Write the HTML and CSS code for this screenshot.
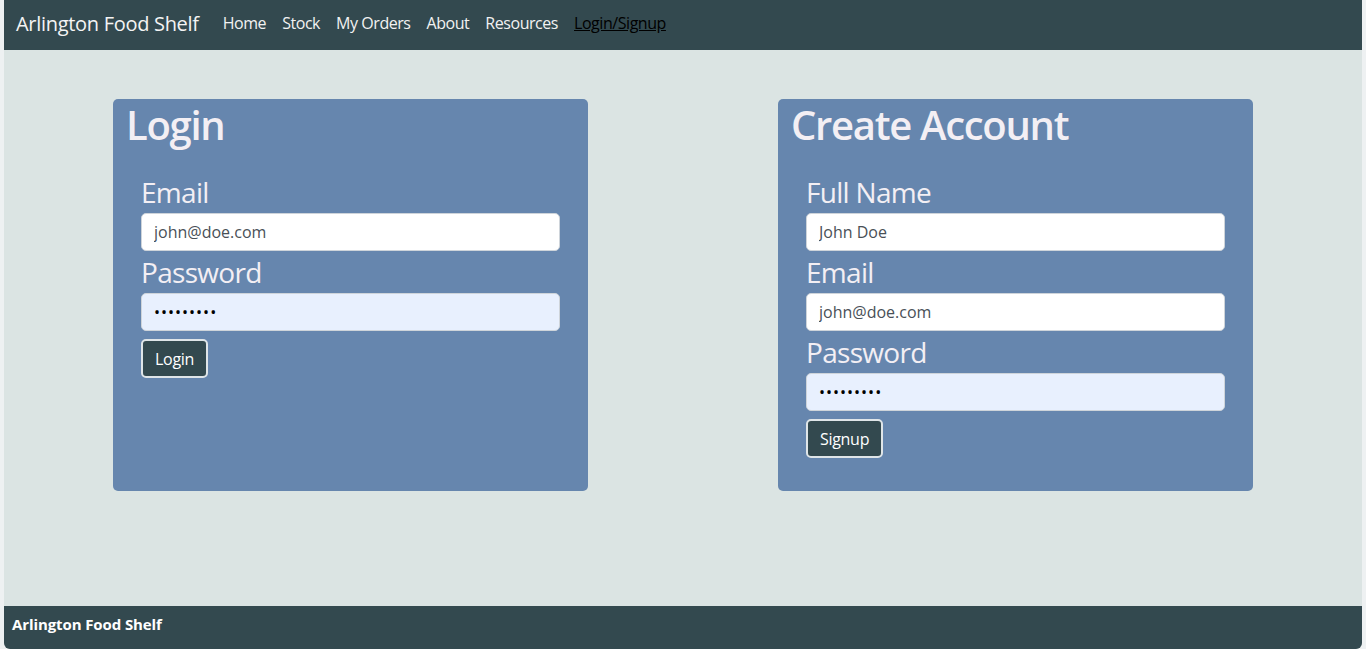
FILE: index.html
```html
<!DOCTYPE html>
<html lang="en">
<head>
<meta charset="utf-8">
<title>Arlington Food Shelf - Login/Signup</title>
<link rel="stylesheet" href="styles.css">
</head>
<body>
<div class="page">
  <nav class="navbar">
    <a class="brand" href="#">Arlington Food Shelf</a>
    <ul class="nav-links">
      <li><a class="nav-link" href="#">Home</a></li>
      <li><a class="nav-link" href="#">Stock</a></li>
      <li><a class="nav-link" href="#">My Orders</a></li>
      <li><a class="nav-link" href="#">About</a></li>
      <li><a class="nav-link" href="#">Resources</a></li>
      <li><a class="nav-link active" href="#">Login/Signup</a></li>
    </ul>
  </nav>
  <main class="main">
    <div class="row">
      <section class="card">
        <h1 class="card-title">Login</h1>
        <form class="form">
          <label class="label" for="login-email">Email</label>
          <input class="input" id="login-email" type="email" placeholder="john@doe.com">
          <label class="label" for="login-pass">Password</label>
          <input class="input autofill" id="login-pass" type="password" value="123456789">
          <button class="btn" type="button">Login</button>
        </form>
      </section>
      <section class="card">
        <h1 class="card-title">Create Account</h1>
        <form class="form">
          <label class="label" for="su-name">Full Name</label>
          <input class="input" id="su-name" type="text" placeholder="John Doe">
          <label class="label" for="su-email">Email</label>
          <input class="input" id="su-email" type="email" placeholder="john@doe.com">
          <label class="label" for="su-pass">Password</label>
          <input class="input autofill" id="su-pass" type="password" value="123456789">
          <button class="btn" type="button">Signup</button>
        </form>
      </section>
    </div>
  </main>
  <footer class="footer">
    <span class="footer-text">Arlington Food Shelf</span>
  </footer>
</div>
</body>
</html>
```
FILE: styles.css
```css
* { box-sizing: border-box; }
html, body { height: 100%; }
body {
  margin: 0;
  padding: 0 4px;
  background: #eef1f2;
  font-family: "Open Sans", "Noto Sans", "Liberation Sans", sans-serif;
  overflow: hidden;
}
.page {
  height: 649px;
  display: flex;
  flex-direction: column;
  background: #dbe4e3;
  border-radius: 0 0 6px 6px;
  overflow: hidden;
}
.navbar {
  height: 50px;
  flex: none;
  background: #33494f;
  display: flex;
  align-items: center;
  padding: 0 12px 4px;
}
.brand {
  color: #f4f4f4;
  text-decoration: none;
  font-size: 20px;
  margin-right: 16px;
  letter-spacing: -0.3px;
}
.nav-links {
  list-style: none;
  margin: 0;
  padding: 0;
  display: flex;
}
.nav-link {
  display: block;
  padding: 8px 8px;
  color: #f2f2f2;
  text-decoration: none;
  font-size: 16px;
  letter-spacing: -0.45px;
}
.nav-link.active {
  color: #000;
  text-decoration: underline;
}
.main {
  flex: 1;
  padding: 49px 109px 0;
}
.row {
  display: flex;
  justify-content: space-between;
  align-items: stretch;
}
.card {
  width: 475px;
  background: #6686ae;
  border-radius: 5px;
  padding: 0 28px 33px 13px;
}
.card-title {
  margin: 0;
  font-size: 40px;
  font-weight: 600;
  line-height: 48px;
  padding-top: 2px;
  height: 48px;
  color: #f3eff4;
  letter-spacing: -1.3px;
}
.form {
  margin-top: 24px;
  padding-left: 15px;
  display: flex;
  flex-direction: column;
  align-items: flex-start;
}
.label {
  display: block;
  font-size: 28px;
  line-height: 42px;
  color: #f3eff4;
  letter-spacing: -0.7px;
}
.input {
  width: 100%;
  height: 38px;
  padding: 6px 12px;
  font-family: inherit;
  font-size: 16px;
  line-height: 24px;
  color: #495057;
  background: #fff;
  border: 1px solid #ced4da;
  border-radius: 5px;
  outline: none;
}
.input::placeholder { color: #495057; opacity: 1; }
.input.autofill {
  background: #e8f0fe;
  color: #000;
  letter-spacing: 1px;
}
.btn {
  margin-top: 8px;
  height: 39px;
  padding: 0 12px;
  font-family: inherit;
  font-size: 16px;
  line-height: 24px;
  color: #fff;
  background: #33494f;
  border: 2px solid #dfe5e8;
  border-radius: 5px;
  letter-spacing: -0.3px;
  cursor: pointer;
}
.footer {
  height: 43px;
  flex: none;
  background: #33494f;
  display: flex;
  align-items: center;
  padding: 0 8px 7px;
}
.footer-text {
  color: #fff;
  font-weight: 700;
  font-size: 15px;
  letter-spacing: -0.1px;
}
```
